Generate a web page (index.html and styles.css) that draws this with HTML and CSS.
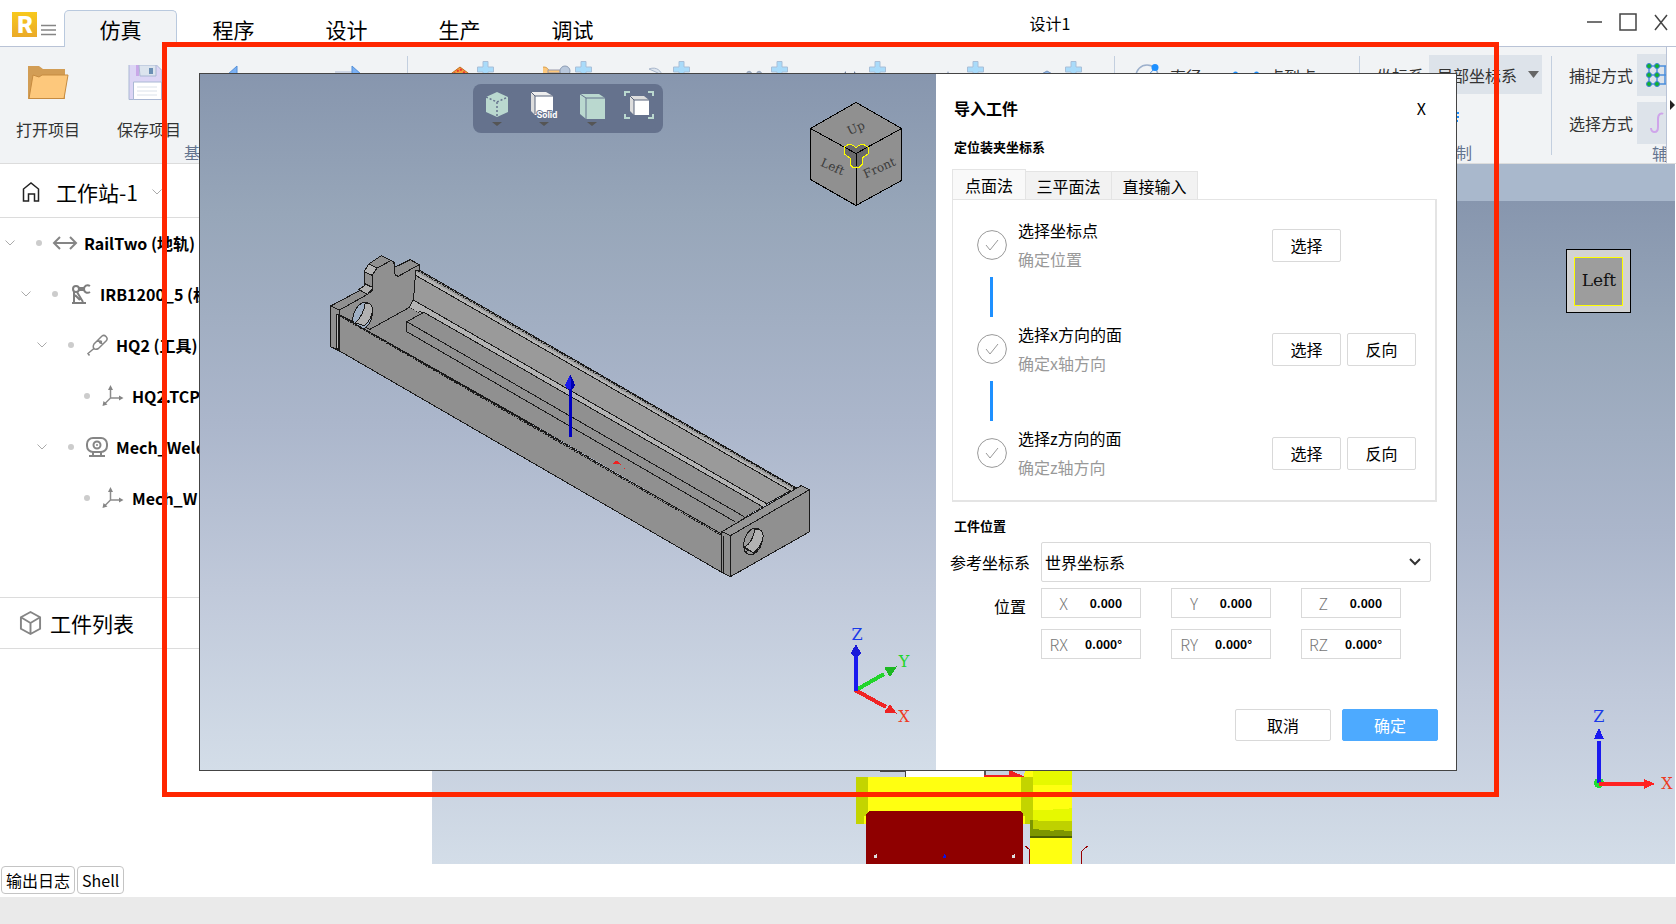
FILE: index.html
```html
<!DOCTYPE html>
<html lang="zh-CN">
<head>
<meta charset="utf-8">
<title>设计1</title>
<link rel="stylesheet" href="styles.css">
</head>
<body>
<svg class="defs" width="0" height="0" aria-hidden="true">
  <symbol id="chevron" viewBox="0 0 10 6"><path d="M.5.5 5 5 9.500.5" fill="none" stroke="#aaa"/></symbol>
  <symbol id="plus" viewBox="0 0 17 17"><path d="M6 .5h5v5.500h5.500v5H11v5.500H6V11H.5V6H6z" fill="#a9dbfa" stroke="#a9bfd8"/></symbol>
  <symbol id="axes" viewBox="0 0 22 22"><path d="M8.500 4v9L3 18.500M8.500 13H18" fill="none" stroke="#8c8c8c" stroke-width="1.500"/><path d="M8.500 0 6 5h5zM21.500 13l-4.500-2.500v5zM.5 21 1.500 16l4 3.500z" fill="#858585"/></symbol>
  <symbol id="check" viewBox="0 0 30 30"><circle cx="15" cy="15" r="14.400" fill="none" stroke="#999"/><path d="m9 15 4 5 8-10" fill="none" stroke="#999"/></symbol>
</svg>

<header class="titlebar">
  <svg class="logo" viewBox="0 0 26 26"><defs><linearGradient id="gold" x1="0" y1="0" x2="0" y2="1"><stop offset="0" stop-color="#f8c91c"/><stop offset="1" stop-color="#eaa928"/></linearGradient></defs><rect width="25" height="25" fill="url(#gold)"/><text x="13" y="21" text-anchor="middle" class="logo-text">R</text></svg>
  <button class="menu" aria-label="菜单"><svg viewBox="0 0 15 12"><path d="M0 1.500h15M0 6h15M0 10.500h15" stroke="#858585" stroke-width="1.500"/></svg></button>
  <nav class="tabs">
    <button class="tab active">仿真</button>
    <button class="tab">程序</button>
    <button class="tab">设计</button>
    <button class="tab">生产</button>
    <button class="tab">调试</button>
  </nav>
  <h1 class="doc-title">设计1</h1>
  <div class="window-controls">
    <button aria-label="最小化"><svg viewBox="0 0 18 18"><path d="M1 9h15" stroke="#444" stroke-width="1.500"/></svg></button>
    <button aria-label="最大化"><svg viewBox="0 0 18 18"><path d="M1 1h16v16H1z" fill="none" stroke="#444" stroke-width="1.500"/></svg></button>
    <button aria-label="关闭"><svg viewBox="0 0 18 18"><path d="m3 2 12 15M15 2 3 17" stroke="#444" stroke-width="1.500"/></svg></button>
  </div>
</header>

<section class="ribbon">
  <div class="group group-base">
    <div class="tools">
      <button class="tool"><svg viewBox="0 0 42 36"><path d="M1 1h11l4 3h22v30H1z" fill="#d29d55"/><path d="M6 10 12 12l3-2h26l-4 23.500H2z" fill="#fdc87c" stroke="#c68b40"/></svg>打开项目</button>
      <button class="tool"><svg viewBox="2 1 42 36"><path d="M3 .5h27l6 6v29H3z" fill="#dcd5f5" stroke="#aab8d4"/><path d="M10 1h3v11h-3z" fill="#c9a8e8"/><path d="M13 1h17v11H14z" fill="#dce4ee" stroke="#aab8d4"/><path d="M23 4h4v6h-4z" fill="#6b8fb4"/><path d="M7.500 18h28v17.500h-28z" fill="#fff" stroke="#aab8d4"/><path d="M11 23h20M11 27h20M11 31h20" stroke="#dbe2ea"/></svg>保存项目</button>
      <button class="tool" aria-label="撤销"><svg viewBox="4 0 42 36"><path d="M12 1v18L2 10z" fill="#7ab0f4" stroke="#5590d8"/></svg></button>
      <button class="tool" aria-label="重做"><svg viewBox="2 0 42 36"><path d="M7 7h17" stroke="#aab8d4"/><path d="M24 1v18l10-9z" fill="#7ab0f4" stroke="#5590d8"/></svg></button>
    </div>
    <div class="group-label">基</div>
  </div>
  <div class="group group-insert">
    <button class="insert" aria-label="工作站"><svg viewBox="0 0 30 24"><path d="m3 13 12-9 12 9v10H3z" fill="#f0a23c" stroke="#c46b20"/><path d="m9 11 6-5 6 5" fill="none" stroke="#e33" stroke-width="2" stroke-dasharray="2"/></svg><svg class="plus"><use href="#plus"/></svg></button>
    <button class="insert" aria-label="机器人"><svg viewBox="3 0 30 24"><circle cx="4" cy="9" r="5" fill="#fdc87c" stroke="#d8a050"/><path d="M8 7h12v3H8z" fill="#fdc87c" stroke="#99a"/><circle cx="25" cy="8" r="5" fill="#b9c8dc" stroke="#8c9cb4"/></svg><svg class="plus"><use href="#plus"/></svg></button>
    <button class="insert" aria-label="工具"><svg viewBox="0 0 30 24"><path d="M8 6c8-3 12 2 14 8l-5-4z" fill="#dce4ee" stroke="#a9b7cc"/></svg><svg class="plus"><use href="#plus"/></svg></button>
    <button class="insert" aria-label="变位机"><svg viewBox="0 0 30 24"><path d="M7 11c2-4 5-3 6 0M17 11c2-4 5-3 6 0" fill="#a9b7cc" stroke="#8c9cb4"/></svg><svg class="plus"><use href="#plus"/></svg></button>
    <button class="insert" aria-label="地轨"><svg viewBox="0 0 30 24"><path d="m4 14 5-6v12zM22 14l-5-6v12z" fill="#6d7f9e"/></svg><svg class="plus"><use href="#plus"/></svg></button>
    <button class="insert" aria-label="坐标"><svg viewBox="0 0 30 24"><path d="m13 8-4 7h8z" fill="#a9b7cc"/></svg><svg class="plus"><use href="#plus"/></svg></button>
    <button class="insert" aria-label="工件"><svg viewBox="0 0 30 24"><path d="m5 13 9-5 9 5-9 6z" fill="#8fb7ea" stroke="#7895bd"/></svg><svg class="plus"><use href="#plus"/></svg></button>
  </div>
  <div class="group group-measure">
    <button class="measure"><svg viewBox="0 0 26 26"><circle cx="12" cy="13" r="11" fill="none" stroke="#9db0cc" stroke-width="1.500"/><path d="M6 20 20 5" stroke="#4b8fdc"/><circle cx="20" cy="4.500" r="3.500" fill="#1e90ff"/></svg>直径</button>
    <button class="measure"><svg viewBox="0 0 26 26"><path d="M2 12h22" stroke="#9db0cc"/><circle cx="2.500" cy="11" r="2.500" fill="#1e90ff"/><circle cx="23.500" cy="11" r="2.500" fill="#1e90ff"/></svg>点到点</button>
  </div>
  <div class="group group-control">
    <div class="frame-row"><label for="frame">坐标系</label>
      <span class="dropdown"><select id="frame"><option>局部坐标系</option></select><svg viewBox="0 0 11 8"><path d="M0 0h11L5.500 7z" fill="#666"/></svg></span></div>
    <svg class="control-icon" viewBox="0 0 8 26"><path d="M1 3h3M1 7h3M1 11h2M0 24h2" stroke="#1e90ff" stroke-width="2"/></svg>
    <div class="group-label">制</div>
  </div>
  <div class="group group-assist">
    <div class="assist-row">捕捉方式<button aria-label="网格捕捉"><svg viewBox="0 0 30 26"><path d="M4 4h26M4 13h26M4 22h26M4 4v18M12 4v18M20 4v18" stroke="#4b8fdc" stroke-width="1.500"/><g fill="#12b32b" stroke="#3a80d8"><circle cx="4" cy="4" r="2.500"/><circle cx="12" cy="4" r="2.500"/><circle cx="4" cy="13" r="2.500"/><circle cx="12" cy="13" r="2.500"/><circle cx="4" cy="22" r="2.500"/><circle cx="12" cy="22" r="2.500"/></g></svg></button></div>
    <div class="assist-row">选择方式<button aria-label="曲线选择"><svg viewBox="0 0 30 26"><path d="M6 18c0 5 7 6 7-1V9c0-6 4-6 5-5" fill="none" stroke="#cfa5ea" stroke-width="2"/></svg></button></div>
    <div class="group-label">辅</div>
  </div>
  <button class="scroll" aria-label="更多"><svg viewBox="0 0 5 10"><path d="M0 0v10l5-5z" fill="#222"/></svg></button>
</section>

<main class="workspace">
  <aside class="sidebar">
    <div class="station">
      <svg class="home" viewBox="0 0 18 20"><path d="M1.500 19V7L9 1l7.500 6v12h-4v-7h-6v7z" fill="none" stroke="#222" stroke-width="1.500"/></svg>
      <span>工作站-1</span><svg class="chevron"><use href="#chevron"/></svg>
    </div>
    <ul class="tree">
      <li class="l0"><svg class="chevron"><use href="#chevron"/></svg><i></i><svg class="node" viewBox="0 0 26 22"><path d="M2 11h22M8 5l-6 6 6 6M18 5l6 6-6 6" fill="none" stroke="#858585" stroke-width="2"/></svg>RailTwo (地轨)</li>
      <li class="l1"><svg class="chevron"><use href="#chevron"/></svg><i></i><svg class="node" viewBox="0 0 26 22"><g fill="none" stroke="#7d7d7d" stroke-width="2"><circle cx="8" cy="6" r="3"/><path d="M11 5h5M11 7h5M22 3c-3-2-6 0-6 3s3 5 6 3M6 9v10M9 9l6 10M7 12l5 5M4 20h14"/></g></svg>IRB1200_5 (机</li>
      <li class="l2"><svg class="chevron"><use href="#chevron"/></svg><i></i><svg class="node" viewBox="0 0 26 22"><g fill="none" stroke="#858585" stroke-width="1.500"><path d="m10 10 8-8q2-1.500 4 .5t.5 4l-8 8q-3 1.500-4.500 0t0-4.500zM14 6l4.500 4.500M10.500 14 4 19.500l1.500 2"/><circle cx="16.500" cy="8" r="1"/></g></svg>HQ2 (工具)</li>
      <li class="l3"><i></i><svg class="node"><use href="#axes"/></svg>HQ2.TCP</li>
      <li class="l2"><svg class="chevron"><use href="#chevron"/></svg><i></i><svg class="node" viewBox="0 0 26 22"><g fill="none" stroke="#858585" stroke-width="2"><rect x="3" y="2" width="20" height="14" rx="6"/><circle cx="13" cy="9" r="3.500"/><path d="M9 16v3M17 16v3M5 20h16"/></g><circle cx="13" cy="9" r="1" fill="#858585"/></svg>Mech_Weld</li>
      <li class="l3"><i></i><svg class="node"><use href="#axes"/></svg>Mech_W</li>
    </ul>
    <div class="parts"><svg viewBox="0 0 24 26"><path d="M12 1.500 22 7v12l-10 5.500L2 19V7zM2 7l10 6 10-6M12 13v11" fill="none" stroke="#858585" stroke-width="2"/></svg>工件列表</div>
  </aside>
  <div class="stage">
    <svg class="scene" viewBox="432 201 1242 663" preserveAspectRatio="xMaxYMax slice">
      <g shape-rendering="crispEdges" transform="translate(820 750) scale(.3333)">
        <path d="M180 66h75v16" fill="none" stroke="#444" stroke-width="3"/>
        <path d="M257 40h234v42H257z" fill="#fff"/><path d="M494 40v36h80" fill="none" stroke="#555" stroke-width="4"/>
        <path d="M491 80h120l-44-20v16h-76z" fill="#f02020"/>
        <path d="M108 81h36v141h-36zM602 81h37v141h-37z" fill="#c3d400"/>
        <path d="M630 210h126v55H630z" fill="#7d9600"/><path d="M639 50h117v193l-54-3v3l-63-6z" fill="#bfd100"/>
        <path d="M639 40h117v173H654v-3h-15z" fill="#e6f900"/><path d="M612 81V70l8-14h19v25zM639 105h117v70l-80 5h-37z" fill="#ff1"/>
        <path d="M144 81h459v141H132v-24h12zM603 198h12v24h-12z" fill="#ff1"/>
        <path d="M630 258h126v6H630z" fill="#4d6000"/><path d="M630 264h126v78H630z" fill="#ff1"/>
        <path d="m138 192 10-9h451l10 9v150H138z" fill="#8f0000"/>
        <path d="M162 314h4v-3l5 3v10h-9zM576 314h4v-3l5 3v10h-9z" fill="#ddd"/><path d="m373 310 5 8v7h-9v-7z" fill="#11d"/>
        <path d="m615 288 13 12v42M801 288l-17 15v39" fill="none" stroke="#900" stroke-width="3"/>
      </g>
      <g shape-rendering="crispEdges"><path d="M1565.500 249.500h64v63.500h-64z" fill="#d3d3d3" stroke="#000"/><path d="M1573.500 257.500h48v48h-48z" fill="#9d9d9d" stroke="#ff0"/></g>
      <text class="cube-label" x="1598" y="286" text-anchor="middle">Left</text>
      <g shape-rendering="crispEdges"><circle cx="1598" cy="783" r="5" fill="#2d3"/><path d="M1598 783v-42" stroke="#1a1aef" stroke-width="4"/><path d="m1598 728-5 11h10z" fill="#1a1aef"/><path d="M1598 784h46" stroke="#f22" stroke-width="4"/><path d="m1654 784-11-5v10z" fill="#f22"/></g>
      <text class="axis axis-z" x="1598" y="722" text-anchor="middle">Z</text><text class="axis axis-x" x="1666" y="789" text-anchor="middle">X</text>
    </svg>
  </div>
</main>
<div class="console"><button>输出日志</button><button>Shell</button></div>
<footer class="status"></footer>

<section class="dialog" role="dialog" aria-labelledby="dlg-title">
  <div class="preview">
    <svg class="scene" viewBox="200 74 736 696">
      <g transform="translate(300 230) scale(.34435 .33333)" class="model" shape-rendering="crispEdges">
        <path d="M115 255 203 298 318 232 1343 830 1290 862 1225 905z" fill="#909090"/>
        <path d="M346 120 1440 773 1355 822 326 208 336 122z" fill="#9a9a9a"/>
        <path class="ns" d="M338 126 1432 779 1425 783 336 136z" fill="#b5b5b5"/>
        <path class="ns" d="M326 208 1357 822 1343 830 314 230z" fill="#b3b3b3"/>
        <path d="M336 136 1425 783M326 208 1357 822M346 243 1343 830M314 230l32 20"/>
        <path d="M344 123 1440 776" class="dash"/>
        <path class="ns" d="M203 298 318 232 346 250 360 247 1343 830 1290 862 1225 912z" fill="#909090"/>
        <path d="M310 305V275l50-28L1343 830M310 275 1290 860M310 305 1263 875M203 298l115-66"/>
        <path d="M89 228 180 178 186 168V125L200 102 236 77 272 96 275 112 320 89 346 104V120L336 122 330 205 318 232 203 298 115 255V363L89 350z" fill="#909090"/>
        <path d="m186 125 14-23 24 12-14 22z" fill="#b5b5b5"/><path d="m170 178 16-10v-8l24 12v10l-14 11z" fill="#b0b0b0"/>
        <path d="M89 228 115 240 196 193 210 177V135L224 114 262 93M186 125l24 12M275 96V130q2 10 12 8L346 104M89 228v122M115 240v15"/>
        <ellipse cx="182" cy="258" rx="27" ry="42" transform="rotate(18 182 258)" fill="#9fafc3"/>
        <path d="M189 221q21-5 22 20-4 30-25 46l-25-8q24-25 28-58z" fill="#b2b2b2"/>
        <path d="M115 255 1225 912V1027L115 363z" fill="#909090"/><path d="M107 253h6v106l-6-3z" fill="#bbb"/>
        <path d="M115 258 1225 917" class="dash"/>
        <path d="M1225 905 1455 767 1480 779 1250 917z" fill="#969696"/><path d="M1250 917 1480 779V905L1250 1040z" fill="#909090"/><path d="M1225 905 1250 917V1040L1230 1030 1224 1025z" fill="#909090"/><path d="M1230 918v112"/>
        <ellipse cx="1316" cy="934" rx="26" ry="41" transform="rotate(18 1316 934)" fill="#9a9a9a"/><path d="M1321 897q25 0 24 22-5 30-28 50l-27-16q27-20 31-56z" fill="#b2b2b2"/><path d="m1289 950 24 16M1289 964l20-2"/>
        <g stroke="none"><path d="M781 470h9v150h-9z" fill="#0000c0"/><path d="m785 433 14 32-7 12h-16l-7-12z" fill="#1a1aea"/><path d="m785 433 14 32-7 12h-5z" fill="#0000b0"/><path d="m909 702 6-7q5-3 10 0l9 9zM941 714h3v3h-3z" fill="#e22"/></g>
      </g>
      <g shape-rendering="crispEdges" fill="#909090" stroke="#000"><path d="m856 102.500 45.500 26v52L856 205.500l-45.500-26v-51z"/><path d="m810.500 128.500 45.500 25 45.500-25M856 153.500v52" fill="none"/></g>
      <g class="face"><text x="856" y="132" text-anchor="middle" transform="rotate(-24 856 128)">Up</text><text x="833" y="171" text-anchor="middle" transform="rotate(24 833 166)">Left</text><text x="879" y="172" text-anchor="middle" transform="rotate(-24 879 167)">Front</text></g>
      <g shape-rendering="crispEdges"><path d="m844.500 147 3-2 4-.5 4.500 3 4.500-3 4 .5 3.500 2v7l-6 4v6.500l-3 3h-6l-3-3V158l-5.500-4z" fill="#6a6a6a" stroke="#ff0"/><path d="m845 147.500 11 6 11-6M856 153.500v12" fill="none" stroke="#000"/></g>
      <g shape-rendering="crispEdges"><path d="m856 690 28-16" stroke="#22d52b" stroke-width="4"/><path d="m896 667-11 1 5 8z" fill="#1cb822" stroke="#1cb822"/><path d="m855 690 31 17" stroke="#f02424" stroke-width="4"/><path d="m896 713-6-8-5 7z" fill="#e22" stroke="#e22"/><path d="M856 691v-38" stroke="#1a1aef" stroke-width="4"/><path d="m856 644-5 9 2 3h6l2-3z" fill="#1a1ad8"/></g>
      <text class="axis axis-z" x="857" y="640" text-anchor="middle">Z</text><text class="axis axis-y" x="904" y="667" text-anchor="middle">Y</text><text class="axis axis-x" x="904" y="722" text-anchor="middle">X</text>
    </svg>
    <div class="view-tools">
      <button aria-label="视角"><svg viewBox="0 0 32 36"><path d="m16 1 11 5v15l-11 5-11-5V6z" fill="#bad8cf"/><path d="m5 6 11 5 11-5M16 11v15" fill="none" stroke="#65728d" stroke-width="1.500" stroke-dasharray="2"/><path d="M11 31h10l-5 4z" fill="#555"/></svg></button>
      <button aria-label="显示方式"><svg viewBox="0 0 32 36"><path d="M3 1h15l7 4H7z" fill="#eee"/><path d="m3 1 4 4v19l-4-4z" fill="#ddd"/><path d="M7 5h18v19H7z" fill="#fff"/><path d="m3 1 4 4h18M7 5v18" fill="none" stroke="#59657c"/><text x="19" y="27" text-anchor="middle">Solid</text><path d="M11 31h10l-5 4z" fill="#555"/></svg></button>
      <button aria-label="实体"><svg viewBox="0 0 32 36"><path d="M4 3h19l6 4v21H10l-6-5z" fill="#bad8cf"/><path d="m4 3 6 4h19M10 7v21" fill="none" stroke="#65728d"/><path d="M11 31h10l-5 4z" fill="#555"/></svg></button>
      <button aria-label="适应窗口"><svg viewBox="0 0 32 36"><path d="M2 5V1h5M25 1h5v4M30 23v4h-5M7 27H2v-4" fill="none" stroke="#bad8cf" stroke-width="2"/><path d="M7 5h14l5 4v15H11l-4-4z" fill="#ddd"/><path d="M11 9h15v15H11z" fill="#fff"/><path d="m7 5 4 4h15M11 9v15" fill="none" stroke="#59657c"/></svg></button>
    </div>
  </div>
  <form class="panel">
    <div class="panel-head"><h2 id="dlg-title">导入工件</h2><button type="button" class="close">X</button></div>
    <h3>定位装夹坐标系</h3>
    <div class="method-tabs"><button type="button" class="active">点面法</button><button type="button">三平面法</button><button type="button">直接输入</button></div>
    <div class="steps">
      <div class="step"><svg><use href="#check"/></svg><p>选择坐标点<small>确定位置</small></p><button type="button">选择</button></div>
      <div class="bar"></div>
      <div class="step"><svg><use href="#check"/></svg><p>选择x方向的面<small>确定x轴方向</small></p><button type="button">选择</button><button type="button">反向</button></div>
      <div class="bar"></div>
      <div class="step"><svg><use href="#check"/></svg><p>选择z方向的面<small>确定z轴方向</small></p><button type="button">选择</button><button type="button">反向</button></div>
    </div>
    <h3 class="pos-title">工件位置</h3>
    <div class="ref-row"><label for="ref">参考坐标系</label><span class="ref-select"><select id="ref"><option>世界坐标系</option></select><svg viewBox="0 0 12 8"><path d="m1 1 5 5 5-5" fill="none" stroke="#333" stroke-width="2"/></svg></span></div>
    <div class="pos-row"><span class="pos-label">位置</span>
      <div class="fields">
        <label><span>X</span><input value="0.000"></label><label><span>Y</span><input value="0.000"></label><label><span>Z</span><input value="0.000"></label>
        <label><span>RX</span><input value="0.000°"></label><label><span>RY</span><input value="0.000°"></label><label><span>RZ</span><input value="0.000°"></label>
      </div>
    </div>
    <div class="actions"><button type="button">取消</button><button type="button" class="primary">确定</button></div>
  </form>
</section>
<div class="highlight"></div>
</body>
</html>
```
FILE: styles.css
```css
* { box-sizing: border-box; }
body {
  margin: 0; min-height: 100vh; position: relative; display: flex; flex-direction: column;
  background: #fff; color: #000; font: 16px/24px "Noto Sans CJK SC", sans-serif; overflow: hidden;
}
button, input, select { font: inherit; color: inherit; margin: 0; padding: 0; border: 0; background: none; }
select { appearance: none; }
h1, h2, h3, p, ul { margin: 0; padding: 0; }
svg { display: block; flex: none; }
.defs { position: absolute; }

.titlebar { display: flex; align-items: flex-end; height: 47px; border-bottom: 1px solid #b9c3d6; }
.logo { width: 26px; height: 26px; margin: 0 3px 8px 12px; }
.logo-text { font: 900 24px Roboto, sans-serif; fill: #fff; }
.menu { width: 15px; margin: 0 8px 10px 0; }
.tabs { display: flex; margin-bottom: -1px; }
.tab { width: 113px; height: 37px; border: 1px solid transparent; border-bottom: 0; border-radius: 5px 5px 0 0; font-size: 21px; line-height: 36px; }
.tab.active { background: #f1f3f5; border-color: #b9c9de; }
.doc-title { flex: 1; text-align: center; font-size: 16px; font-weight: 400; margin-bottom: 11px; }
.window-controls { width: 205px; display: flex; justify-content: flex-end; gap: 15px; padding-right: 6px; margin-bottom: 15px; }
.window-controls svg { width: 18px; height: 18px; }

.ribbon { display: flex; height: 117px; background: #f1f3f5; border-bottom: 1px solid #dcdcdc; color: #333; overflow: hidden; }
.group { position: relative; padding-top: 8px; flex: none; }
.group::after { content: ""; position: absolute; right: 0; top: 9px; height: 99px; border-right: 1px solid #c3cfdf; }
.group-label { color: #64748f; line-height: 20px; }
.group-base { width: 408px; }
.tools { display: flex; height: 87px; gap: 1px; }
.tool { width: 100px; display: flex; flex-direction: column; align-items: center; gap: 16px; padding-top: 10px; padding-right: 4px; }
.tool svg { width: 42px; height: 36px; }
.group-base .group-label { padding-left: 184px; }
.group-insert { width: 707px; display: flex; gap: 50px; padding-left: 37px; align-items: flex-start; }
.insert { display: flex; width: 48px; padding-top: 6px; }
.insert svg { width: 30px; height: 24px; margin-right: 2px; margin-top: 2px; }
.insert .plus { width: 17px; height: 17px; margin: 0; }
.group-measure { flex: 1 0 244px; display: flex; gap: 31px; align-items: flex-start; padding-left: 20px; }
.measure { display: flex; align-items: center; gap: 9px; padding-top: 8px; }
.measure svg { width: 26px; height: 26px; }
.group-control { width: 192px; }
.frame-row { display: flex; align-items: center; gap: 5px; padding-left: 16px; height: 39px; white-space: nowrap; }
.dropdown { display: flex; align-items: center; background: #dde3ea; width: 113px; height: 39px; padding-left: 8px; }
.dropdown select { flex: 1; width: 84px; }
.dropdown svg { width: 11px; margin-right: 3px; }
.control-icon { width: 8px; height: 26px; margin: 16px 0 6px 95px; }
.group-control .group-label { padding-left: 96px; }
.group-assist { width: 114px; overflow: hidden; padding-top: 7px; }
.group-assist::after { display: none; }
.assist-row { display: flex; align-items: center; gap: 4px; padding-left: 17px; height: 42px; margin-bottom: 6px; white-space: nowrap; }
.assist-row button { width: 60px; height: 42px; flex: none; background: #dde3ea; padding-left: 8px; }
.assist-row svg { width: 30px; height: 26px; }
.group-assist .group-label { padding-left: 100px; margin-top: -7px; }
.scroll { width: 10px; background: #fff; border-left: 1px solid #b9c3d6; padding-left: 3px; flex: none; }
.scroll svg { width: 5px; height: 10px; }

.workspace { flex: 1; display: flex; }
.sidebar { width: 432px; flex: none; }
.station { height: 54px; border-bottom: 1px solid #dcdcdc; display: flex; align-items: center; padding: 2px 0 0 22px; font-size: 21px; }
.home { width: 18px; height: 20px; margin-right: 16px; }
.chevron { width: 10px; height: 6px; }
.station .chevron { margin-left: 14px; }
.tree { list-style: none; height: 380px; border-bottom: 1px solid #dcdcdc; font-weight: 700; }
.tree li { display: flex; align-items: center; height: 51px; padding: 0 0 2px 5px; white-space: nowrap; }
.tree i { width: 6px; height: 6px; border-radius: 3px; background: #ccc; margin: 0 10px 0 21px; }
.tree .node { width: 26px; height: 22px; margin-right: 6px; }
.tree .l1 { padding-left: 21px; }
.tree .l2 { padding-left: 37px; }
.tree .l3 { padding-left: 63px; }
.parts { height: 51px; border-bottom: 1px solid #dcdcdc; display: flex; align-items: center; gap: 8px; padding-left: 19px; font-size: 21px; }
.parts svg { width: 23px; height: 26px; }
.stage { position: relative; flex: 1; margin-right: 1px; border-top: 37px solid #a9b8cc; }
.stage, .preview { background: linear-gradient(#8796ae, #97a6b9 20%, #abb6cb 50%, #c0c9da 74%, #d3dde8); }
.stage { background-origin: padding-box; }
.scene { position: absolute; inset: 0; width: 100%; height: 100%; }
.axis { font: 16px "DejaVu Serif", serif; }
.cube-label { font: 17px "DejaVu Serif", serif; fill: #111; }
.axis-z { fill: #1a3ae8; }
.axis-y { fill: #22d52b; }
.axis-x { fill: #ee3a22; }
.face text { font: 12px "DejaVu Serif", serif; fill: #3a3a3a; }
.model path, .model ellipse { stroke: #1a1a1a; vector-effect: non-scaling-stroke; }
.model path:not([fill]) { fill: none; }
.model .ns, .model g path { stroke: none; }
.model .dash { stroke-dasharray: 2 1; }

.console { height: 33px; display: flex; gap: 2px; padding: 2px 1px; align-items: flex-start; }
.console button { height: 28px; border: 1px solid #c4c4c4; border-radius: 4px; padding: 0 4px; }
.status { height: 27px; background: #eaeaea; }

.dialog { position: absolute; top: 73px; right: 219px; bottom: 153px; left: 199px; display: flex; background: #fff; border: 1px solid #444; }
.preview { position: relative; flex: 1; }
.view-tools { position: absolute; top: 10px; left: 0; right: 0; width: 190px; height: 49px; margin: 0 auto; display: flex; border-radius: 8px; background: #65728d; }
.view-tools button { flex: 1; display: flex; justify-content: center; align-items: flex-start; padding-top: 7px; }
.view-tools svg { width: 32px; height: 36px; }
.view-tools text { font: 700 9px Roboto, sans-serif; fill: #fff; stroke: #65728d; stroke-width: 2px; paint-order: stroke; }

.panel { width: 520px; padding: 22px 18px 29px 16px; display: flex; flex-direction: column; }
.panel-head { display: flex; justify-content: space-between; padding: 0 12px 0 2px; }
h2 { font-size: 16px; line-height: 24px; }
h3 { font-size: 13px; line-height: 20px; padding-left: 2px; margin-top: 17px; }
.method-tabs { display: flex; align-items: flex-end; margin-top: 12px; height: 30px; }
.method-tabs button { width: 86px; height: 28px; line-height: 26px; background: #f2f2f2; border: 1px solid #e4e4e4; border-left: 0; border-bottom: 0; }
.method-tabs .active { width: 74px; height: 30px; background: #f9f9f9; border-left: 1px solid #e4e4e4; }
.steps { width: 485px; border: 1px solid #e4e4e4; border-right-width: 2px; border-bottom-width: 2px; padding: 15px 18px 17px 24px; }
.step { display: flex; align-items: center; height: 60px; gap: 6px; }
.step svg { width: 30px; height: 30px; margin-right: 5px; }
.step p { width: 248px; line-height: 29px; }
.step small { display: block; font-size: 16px; color: #999; }
.step button { width: 69px; height: 33px; line-height: 30px; border: 1px solid #d9d9d9; border-radius: 2px; }
.bar { width: 3px; height: 40px; margin: 2px 0 2px 13px; background: #1e90ff; }
.pos-title { margin-top: 14px; }
.ref-row { display: flex; align-items: center; justify-content: space-between; margin-top: 6px; padding-right: 7px; height: 40px; }
.ref-row label { margin-left: -2px; }
.ref-select { display: flex; align-items: center; width: 390px; height: 40px; border: 1px solid #d9d9d9; border-radius: 2px; padding: 0 9px 0 3px; }
.ref-select select { flex: 1; height: 38px; }
.ref-select svg { width: 12px; height: 8px; }
.pos-row { display: flex; margin-top: 6px; }
.pos-label { width: 89px; padding: 6px 0 0 42px; }
.fields { display: grid; grid-template-columns: repeat(3, 100px); gap: 11px 30px; }
.fields label { display: flex; align-items: center; height: 30px; border: 1px solid #d9d9d9; }
.fields span { width: 26px; text-align: right; color: #777; font-weight: 300; }
.fields input { flex: 1; min-width: 0; text-align: right; padding-right: 18px; font-size: 12px; font-weight: 700; }
.actions { display: flex; justify-content: flex-end; gap: 11px; margin-top: auto; }
.actions button { width: 96px; height: 32px; line-height: 30px; border: 1px solid #d9d9d9; border-radius: 2px; }
.actions .primary { background: #4daaff; border-color: #4daaff; color: #fff; }
.highlight { position: absolute; top: 42px; right: 177px; bottom: 127px; left: 162px; border: 5px solid #ff2600; pointer-events: none; }
```
